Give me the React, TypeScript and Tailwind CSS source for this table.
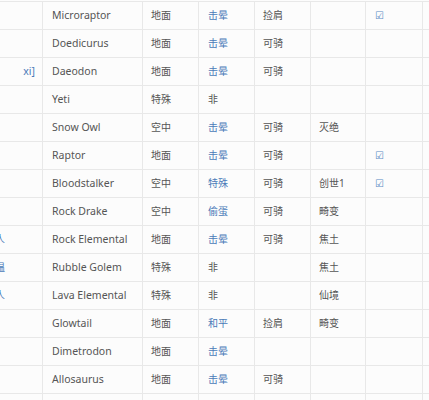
import React from "react";

type Row = {
  pre?: string;
  name: string;
  kind: string;
  tame: string;
  tameBlue: boolean;
  ride?: string;
  dlc?: string;
  check?: boolean;
};

const rows: Row[] = [
  { name: "Microraptor", kind: "地面", tame: "击晕", tameBlue: true, ride: "捡肩", check: true },
  { name: "Doedicurus", kind: "地面", tame: "击晕", tameBlue: true, ride: "可骑" },
  { pre: "[xi]", name: "Daeodon", kind: "地面", tame: "击晕", tameBlue: true, ride: "可骑" },
  { name: "Yeti", kind: "特殊", tame: "非", tameBlue: false },
  { name: "Snow Owl", kind: "空中", tame: "击晕", tameBlue: true, ride: "可骑", dlc: "灭绝" },
  { name: "Raptor", kind: "地面", tame: "击晕", tameBlue: true, ride: "可骑", check: true },
  { name: "Bloodstalker", kind: "空中", tame: "特殊", tameBlue: true, ride: "可骑", dlc: "创世1", check: true },
  { name: "Rock Drake", kind: "空中", tame: "偷蛋", tameBlue: true, ride: "可骑", dlc: "畸变" },
  { pre: "人", name: "Rock Elemental", kind: "地面", tame: "击晕", tameBlue: true, ride: "可骑", dlc: "焦土" },
  { pre: "温", name: "Rubble Golem", kind: "特殊", tame: "非", tameBlue: false, dlc: "焦土" },
  { pre: "人", name: "Lava Elemental", kind: "特殊", tame: "非", tameBlue: false, dlc: "仙境" },
  { name: "Glowtail", kind: "地面", tame: "和平", tameBlue: true, ride: "捡肩", dlc: "畸变" },
  { name: "Dimetrodon", kind: "地面", tame: "击晕", tameBlue: true },
  { name: "Allosaurus", kind: "地面", tame: "击晕", tameBlue: true, ride: "可骑" },
  { name: "", kind: "", tame: "", tameBlue: false },
];

const cell = "h-[28px] border-r border-b border-[#e8e8e8] flex items-center overflow-hidden whitespace-nowrap";
const cjk = "text-[10px]";

export default function App() {
  return (
    <div
      className="w-[429px] h-[400px] overflow-hidden bg-[#fcfcfc] text-[10.5px] text-[#555]"
      style={{ fontFamily: '"Segoe UI", "Noto Sans", "Noto Sans CJK SC", sans-serif' }}
    >
      <div className="h-[1px] bg-[#e8e8e8] mt-[1px] w-[500px]" />
      <div className="grid grid-cols-[43px_100px_56px_56px_56px_55px_57px_60px] w-[483px]">
        {rows.map((r, i) => (
          <React.Fragment key={i}>
            <div className={`${cell} relative`}>
              {r.pre === "[xi]" ? (
                <span className="absolute right-[7px] text-[#4a7ab8]">xi]</span>
              ) : r.pre ? (
                <span className={`absolute left-[-5px] text-[#4a7ab8] ${cjk}`}>{r.pre}</span>
              ) : null}
            </div>
            <div className={`${cell} pl-[9px]`}>{r.name}</div>
            <div className={`${cell} pl-[8px] ${cjk}`}>{r.kind}</div>
            <div className={`${cell} pl-[9px] ${cjk} ${r.tameBlue ? "text-[#4a7ab8]" : ""}`}>{r.tame}</div>
            <div className={`${cell} pl-[8px] ${cjk}`}>{r.ride ?? ""}</div>
            <div className={`${cell} pl-[8px] ${cjk}`}>{r.dlc ?? ""}</div>
            <div className={`${cell} pl-[9px]`}>
              {r.check ? (
                <span className="text-[#5a88c4] text-[10px]" style={{ fontFamily: '"DejaVu Sans", sans-serif' }}>☑</span>
              ) : null}
            </div>
            <div className={`${cell}`} />
          </React.Fragment>
        ))}
      </div>
    </div>
  );
}
